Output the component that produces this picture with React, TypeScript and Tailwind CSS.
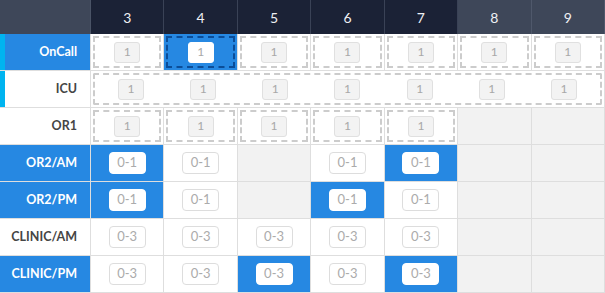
import React from "react";

const DAYS = [3, 4, 5, 6, 7, 8, 9];

type Cell =
  | { kind: "dash"; on?: boolean }
  | { kind: "pill"; text: string; on?: boolean }
  | { kind: "empty" };

type Row = {
  label: string;
  on: boolean;
  marker?: boolean;
  span?: boolean;
  cells: Cell[];
};

const d = (on = false): Cell => ({ kind: "dash", on });
const p = (text: string, on = false): Cell => ({ kind: "pill", text, on });
const e: Cell = { kind: "empty" };

const ROWS: Row[] = [
  { label: "OnCall", on: true, marker: true, cells: [d(), d(true), d(), d(), d(), d(), d()] },
  { label: "ICU", on: false, marker: true, span: true, cells: [] },
  { label: "OR1", on: false, cells: [d(), d(), d(), d(), d(), e, e] },
  { label: "OR2/AM", on: true, cells: [p("0-1", true), p("0-1"), e, p("0-1"), p("0-1", true), e, e] },
  { label: "OR2/PM", on: true, cells: [p("0-1", true), p("0-1"), e, p("0-1", true), p("0-1"), e, e] },
  { label: "CLINIC/AM", on: false, cells: [p("0-3"), p("0-3"), p("0-3"), p("0-3"), p("0-3"), e, e] },
  { label: "CLINIC/PM", on: true, cells: [p("0-3"), p("0-3"), p("0-3", true), p("0-3"), p("0-3", true), e, e] },
];

function SmallOne({ on = false }: { on?: boolean }) {
  return (
    <div
      className={
        "w-[26px] h-[21px] rounded-[3px] border flex items-center justify-center text-[12px] text-[#a8a8a8] " +
        (on ? "bg-white border-white" : "bg-[#f3f3f3] border-[#e0e0e0]")
      }
    >
      1
    </div>
  );
}

function CellView({ cell }: { cell: Cell }) {
  if (cell.kind === "empty") {
    return <div className="h-full bg-[#f2f2f2] border-r border-b border-[#dedede]" />;
  }
  if (cell.kind === "dash") {
    return (
      <div
        className={
          "h-full p-[2px] border-r border-b border-[#dedede] " + (cell.on ? "bg-[#2688e2]" : "bg-white")
        }
      >
        <div
          className={
            "h-full border-2 border-dashed flex items-center justify-center " +
            (cell.on ? "border-[#0b4d98]" : "border-[#cccccc]")
          }
        >
          <SmallOne on={cell.on} />
        </div>
      </div>
    );
  }
  return (
    <div
      className={
        "h-full flex items-center justify-center border-r border-b border-[#dedede] " +
        (cell.on ? "bg-[#2688e2]" : "bg-white")
      }
    >
      <div
        className={
          "w-[37px] h-[22px] rounded-[4px] border bg-white flex items-center justify-center text-[13px] text-[#ababab] " +
          (cell.on ? "border-white" : "border-[#dddddd]")
        }
      >
        {cell.text}
      </div>
    </div>
  );
}

export default function App() {
  return (
    <div
      className="w-[605px] h-[293px] bg-white overflow-hidden"
      style={{ fontFamily: "Lato, 'Open Sans', sans-serif" }}
    >
      <div className="grid grid-cols-[91px_repeat(7,1fr)] grid-rows-[34px_repeat(7,37px)]">
        {/* header */}
        <div className="bg-[#3e4759] border-r border-[#4a5366]" />
        {DAYS.map((day, i) => (
          <div
            key={day}
            className={
              "flex items-center justify-center text-[14px] text-[#eef0f4] border-r border-[#3a4256] " +
              (i < 5 ? "bg-[#1b2236]" : "bg-[#3e4759] border-[#4f586b]")
            }
          >
            {day}
          </div>
        ))}

        {ROWS.map((row) => (
          <React.Fragment key={row.label}>
            <div
              className={
                "relative flex items-center justify-end pr-[13px] text-[12.5px] font-bold border-r border-b border-[#dedede] " +
                (row.on ? "bg-[#2688e2] text-white" : "bg-white text-[#454545]")
              }
            >
              {row.marker && <div className="absolute left-0 top-0 bottom-0 w-[5px] bg-[#00b4f0]" />}
              {row.label}
            </div>
            {row.span ? (
              <div className="col-span-7 h-full p-[2px] border-r border-b border-[#dedede] bg-white">
                <div className="h-full border-2 border-dashed border-[#cccccc] rounded-[2px] grid grid-cols-7 items-center justify-items-center">
                  {DAYS.map((day) => (
                    <SmallOne key={day} />
                  ))}
                </div>
              </div>
            ) : (
              row.cells.map((cell, i) => <CellView key={i} cell={cell} />)
            )}
          </React.Fragment>
        ))}
      </div>
    </div>
  );
}
